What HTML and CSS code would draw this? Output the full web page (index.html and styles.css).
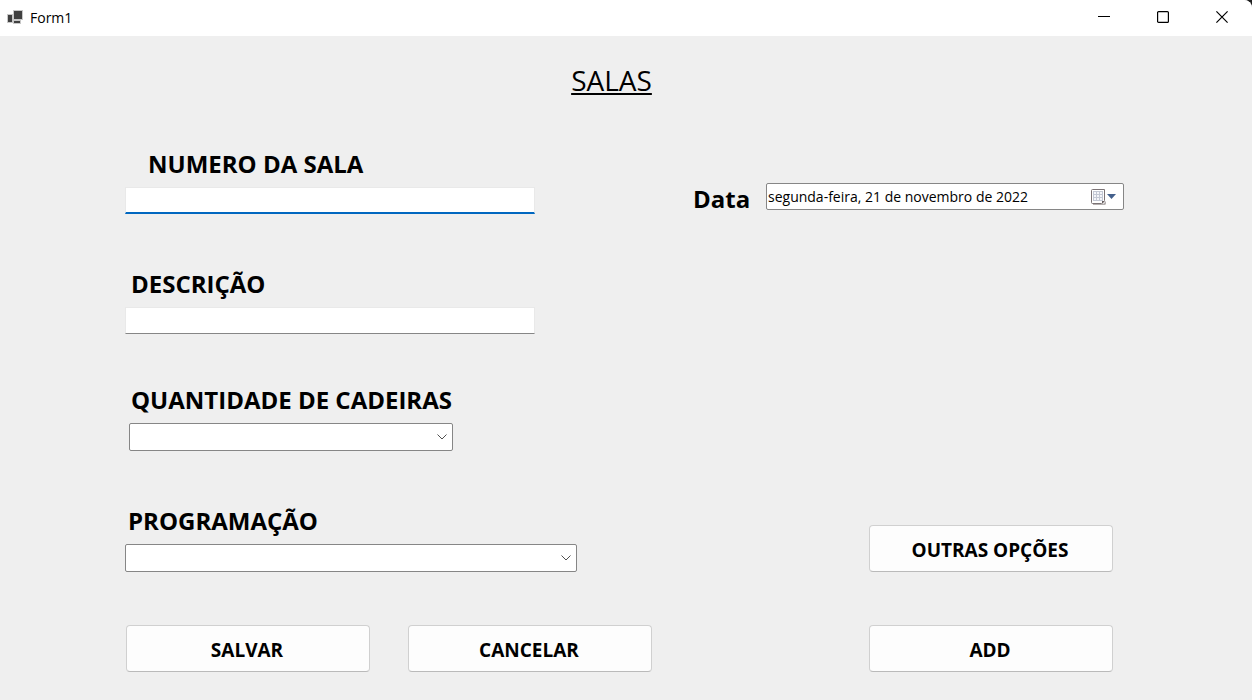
FILE: index.html
```html
<!DOCTYPE html>
<html lang="pt-BR">
<head>
<meta charset="utf-8">
<title>Form1</title>
<link rel="stylesheet" href="styles.css">
</head>
<body>
<div class="window">
  <header class="titlebar">
    <svg class="app-icon" width="17" height="16" viewBox="0 0 17 16" aria-hidden="true">
      <path fill="#c8c8c8" d="M0 4h6V0h10v10h-2v4H6v-1H0z"/>
      <path fill="#404040" d="M1 5h4v7H1zM7 1h8v8H7zM7 11h6v2H7z"/>
    </svg>
    <span class="caption">Form1</span>
    <div class="window-controls">
      <button class="control" type="button" aria-label="Minimizar">
        <svg width="12" height="12" viewBox="0 0 12 12"><path d="M0 5.5h12"/></svg>
      </button>
      <button class="control" type="button" aria-label="Maximizar">
        <svg width="12" height="12" viewBox="0 0 12 12"><rect x=".6" y=".6" width="10.8" height="10.8" rx="1"/></svg>
      </button>
      <button class="control" type="button" aria-label="Fechar">
        <svg width="12" height="12" viewBox="0 0 12 12"><path d="M.4.4l11.2 11.2M11.6.4L.4 11.6"/></svg>
      </button>
    </div>
  </header>

  <main class="content">
    <h1 class="heading">SALAS</h1>
    <form class="form">
      <div class="column-left">
        <div class="field">
          <label class="label label-inset" for="numero">NUMERO DA SALA</label>
          <input class="text-box text-box-active" id="numero" type="text">
        </div>
        <div class="field field-close">
          <label class="label label-indent" for="descricao">DESCRIÇÃO</label>
          <input class="text-box" id="descricao" type="text">
        </div>
        <div class="field">
          <label class="label label-indent" for="quantidade">QUANTIDADE DE CADEIRAS</label>
          <div class="combo combo-short">
            <select class="select" id="quantidade"><option></option></select>
            <svg class="chevron" width="10" height="6" viewBox="0 0 10 6" aria-hidden="true"><path d="M.5.5L5 5 9.5.5"/></svg>
          </div>
        </div>
        <div class="field field-last">
          <label class="label label-near" for="programacao">PROGRAMAÇÃO</label>
          <div class="combo">
            <select class="select" id="programacao"><option></option></select>
            <svg class="chevron" width="10" height="6" viewBox="0 0 10 6" aria-hidden="true"><path d="M.5.5L5 5 9.5.5"/></svg>
          </div>
        </div>
        <div class="actions">
          <button class="button" type="button">SALVAR</button>
          <button class="button" type="button">CANCELAR</button>
        </div>
      </div>

      <div class="column-right">
        <div class="date-row">
          <label class="label" for="data">Data</label>
          <div class="date-picker">
            <input class="date-input" id="data" type="text" value="segunda-feira, 21 de novembro de 2022">
            <button class="date-button" type="button" aria-label="Abrir calendário">
              <svg width="26" height="16" viewBox="0 0 26 16">
                <path fill="#b5b0b0" d="M2 15h10l3-3v3l-1 1H2z"/>
                <path fill="#fff" stroke="#7b7375" d="M1.5.5h12v11l-3 3h-9q-1 0-1-1v-12q0-1 1-1z"/>
                <path fill="#c3c8d4" d="M2 2h10v10H2z"/>
                <path fill="#f4f5f9" d="M3 3h2v2H3zM6 3h2v2H6zM9 3h2v2H9zM3 6h2v2H3zM6 6h2v2H6zM9 6h2v2H9zM3 9h2v2H3zM6 9h2v2H6zM9 9h2v2H9z"/>
                <path fill="#665e60" d="M11 15v-3h3z"/>
                <path fill="#44608c" d="M16 5h9l-4.500 5z"/>
              </svg>
            </button>
          </div>
        </div>
        <div class="side-actions">
          <button class="button" type="button">OUTRAS OPÇÕES</button>
          <button class="button" type="button">ADD</button>
        </div>
      </div>
    </form>
  </main>
</div>
</body>
</html>
```
FILE: styles.css
```css
* {
  box-sizing: border-box;
}

body {
  margin: 0;
  background: #202020;
  color: #000;
  font-family: "Open Sans", "Noto Sans", sans-serif;
}

button,
input,
select {
  font-family: inherit;
  color: inherit;
}

.window {
  display: flex;
  flex-direction: column;
  min-height: 100vh;
  background: #efefef;
  border-top-right-radius: 8px;
  overflow: hidden;
}

.titlebar {
  display: flex;
  align-items: center;
  height: 36px;
  padding: 0 1px 0 7px;
  background: #fff;
}

.caption {
  margin-left: 6px;
  font-size: 14px;
  line-height: 20px;
}

.window-controls {
  display: flex;
  align-self: flex-start;
  margin-left: auto;
}

.control {
  display: flex;
  align-items: center;
  justify-content: center;
  width: 59px;
  height: 34px;
  padding: 0;
  border: 0;
  background: none;
}

.control svg {
  fill: none;
  stroke: #000;
  stroke-width: 1.2;
}

.content {
  flex: 1;
  padding: 24px 128px 28px 125px;
}

.heading {
  margin: 0 0 48px;
  padding-right: 26px;
  font-size: 28px;
  font-weight: 500;
  line-height: 40px;
  text-align: center;
  text-decoration: underline;
  text-decoration-thickness: 2px;
  text-underline-offset: 2px;
}

.form {
  display: flex;
  justify-content: space-between;
  gap: 40px;
}

.column-left {
  flex: 0 1 527px;
}

.field {
  margin-bottom: 54px;
}

.field-close {
  margin-bottom: 50px;
}

.field-last {
  margin-bottom: 53px;
}

.label {
  display: block;
  font-size: 24px;
  font-weight: 700;
  line-height: 32px;
  white-space: nowrap;
}

.field .label {
  margin-bottom: 7px;
}

.label-inset {
  padding-left: 23px;
}

.label-indent {
  padding-left: 6px;
}

.label-near {
  padding-left: 3px;
}

.text-box {
  display: block;
  width: 410px;
  max-width: 100%;
  height: 27px;
  padding: 0 4px;
  border: 1px solid #e9e9e9;
  border-bottom-color: #868686;
  background: #fff;
  font-size: 14px;
  outline: 0;
}

.text-box-active {
  border-bottom: 2px solid #0067c0;
}

.combo {
  display: grid;
  align-items: center;
  width: 452px;
  max-width: 100%;
}

.combo-short {
  width: 324px;
  margin-left: 4px;
}

.select {
  grid-area: 1 / 1;
  width: 100%;
  height: 28px;
  padding: 0 24px 0 4px;
  border: 1px solid #868686;
  border-radius: 2px;
  background: #fff;
  font-size: 14px;
  appearance: none;
}

.chevron {
  grid-area: 1 / 1;
  justify-self: end;
  margin-right: 6px;
  fill: none;
  stroke: #505050;
  pointer-events: none;
}

.actions {
  display: flex;
  gap: 38px;
  padding-left: 1px;
}

.button {
  width: 244px;
  height: 47px;
  padding: 2px 2px 0 0;
  border: 1px solid #d0d0d0;
  border-bottom-color: #bababa;
  border-radius: 4px;
  background: #fdfdfd;
  font-size: 19px;
  font-weight: 700;
  line-height: 24px;
}

.column-right {
  display: flex;
  flex: 0 1 431px;
  flex-direction: column;
  justify-content: space-between;
  padding-top: 35px;
}

.date-row {
  display: flex;
  align-items: flex-start;
  justify-content: space-between;
}

.date-picker {
  display: flex;
  flex: 0 1 358px;
  align-items: center;
  height: 27px;
  border: 1px solid #868686;
  border-radius: 2px;
  background: #fff;
}

.date-input {
  flex: 1;
  min-width: 0;
  padding: 0 0 0 1px;
  border: 0;
  background: none;
  font-size: 14px;
  line-height: 20px;
  outline: 0;
}

.date-button {
  display: flex;
  padding: 0 6px 0 0;
  border: 0;
  background: none;
}

.side-actions {
  display: flex;
  flex-direction: column;
  align-items: flex-end;
  gap: 53px;
  padding-right: 11px;
}
```
